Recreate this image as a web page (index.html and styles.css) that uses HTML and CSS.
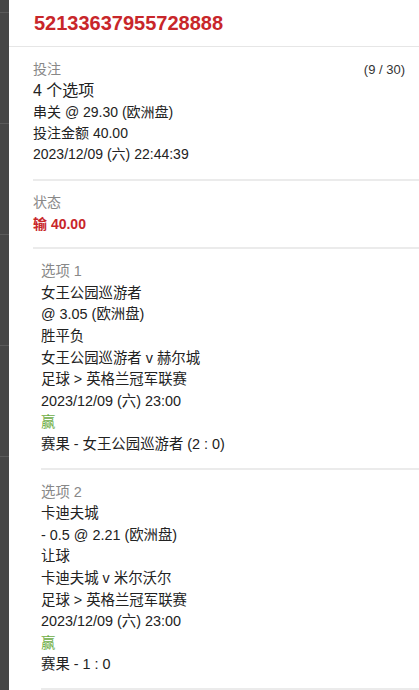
FILE: index.html
```html
<!DOCTYPE html>
<html lang="zh">
<head>
  <meta charset="UTF-8">
  <title>注单详情</title>
  <link rel="stylesheet" href="styles.css">
</head>
<body>

  <div class="page">
    <div class="backdrop">
      <div class="bd-row"></div>
      <div class="bd-row"></div>
      <div class="bd-row"></div>
      <div class="bd-row"></div>
      <div class="bd-row"></div>
    </div>

    <div class="panel">
      <div class="head">
        <div class="ticket-no">52133637955728888</div>
      </div>

      <div class="sec sec-bet">
        <div class="sec-top">
          <span class="label">投注</span>
          <span class="count">(9 / 30)</span>
        </div>
        <div class="big">4 个选项</div>
        <div class="row">串关 @ 29.30 (欧洲盘)</div>
        <div class="row">投注金额 40.00</div>
        <div class="row">2023/12/09 (六) 22:44:39</div>
      </div>

      <div class="sec sec-status">
        <div class="label">状态</div>
        <div class="status lose">输 40.00</div>
      </div>

      <div class="legs">
        <div class="leg">
          <div class="label">选项 1</div>
          <div class="line">女王公园巡游者</div>
          <div class="line">@ 3.05 (欧洲盘)</div>
          <div class="line">胜平负</div>
          <div class="line">女王公园巡游者 v 赫尔城</div>
          <div class="line">足球 &gt; 英格兰冠军联赛</div>
          <div class="line">2023/12/09 (六) 23:00</div>
          <div class="line win">赢</div>
          <div class="line">赛果 - 女王公园巡游者 (2 : 0)</div>
        </div>

        <div class="leg">
          <div class="label">选项 2</div>
          <div class="line">卡迪夫城</div>
          <div class="line">- 0.5 @ 2.21 (欧洲盘)</div>
          <div class="line">让球</div>
          <div class="line">卡迪夫城 v 米尔沃尔</div>
          <div class="line">足球 &gt; 英格兰冠军联赛</div>
          <div class="line">2023/12/09 (六) 23:00</div>
          <div class="line win">赢</div>
          <div class="line">赛果 - 1 : 0</div>
        </div>
      </div>
    </div>
  </div>

</body>
</html>
```

FILE: styles.css
```css
body {
  margin: 0;
  padding: 0;
  background: #fff;
  color: #222;
  font-family: 'Liberation Sans', Arial, 'Noto Sans CJK SC', sans-serif;
  font-size: 14px;
  overflow: hidden;
}

.page {
  display: flex;
  height: 690px;
}

.backdrop {
  width: 9px;
  flex-shrink: 0;
  background: #464646;
  display: flex;
  flex-direction: column;
  gap: 110px;
  padding-top: 12px;
  box-sizing: border-box;
}

.bd-row {
  height: 1px;
  background: #5a5a5a;
}

.panel {
  flex: 1;
  background: #fff;
  min-width: 0;
}

.head {
  padding: 10px 25px;
  border-bottom: 1px solid #e6e6e6;
}

.ticket-no {
  font-size: 20px;
  line-height: 26px;
  font-weight: bold;
  color: #c8262a;
}

.sec {
  margin-left: 24px;
  padding-right: 14px;
  border-bottom: 2px solid #ebebeb;
}

.sec-bet {
  padding-top: 12px;
  padding-bottom: 14.5px;
}

.sec-status {
  padding-top: 11px;
  padding-bottom: 12.5px;
}

.sec-top {
  display: flex;
  justify-content: space-between;
  line-height: 21px;
}

.label {
  color: #888;
  line-height: 21px;
}

.count {
  font-size: 13px;
  color: #333;
}

.big {
  font-size: 16px;
  line-height: 22px;
}

.row {
  line-height: 20.75px;
}

.status {
  line-height: 22px;
  font-weight: bold;
}

.lose {
  color: #c8262a;
}

.legs {
  margin-left: 32px;
}

.leg {
  padding: 12px 0;
  border-bottom: 2px solid #ebebeb;
  font-size: 14.4px;
}

.leg .label {
  line-height: 21.6px;
}

.line {
  line-height: 21.6px;
}

.win {
  color: #6dad45;
}
```
